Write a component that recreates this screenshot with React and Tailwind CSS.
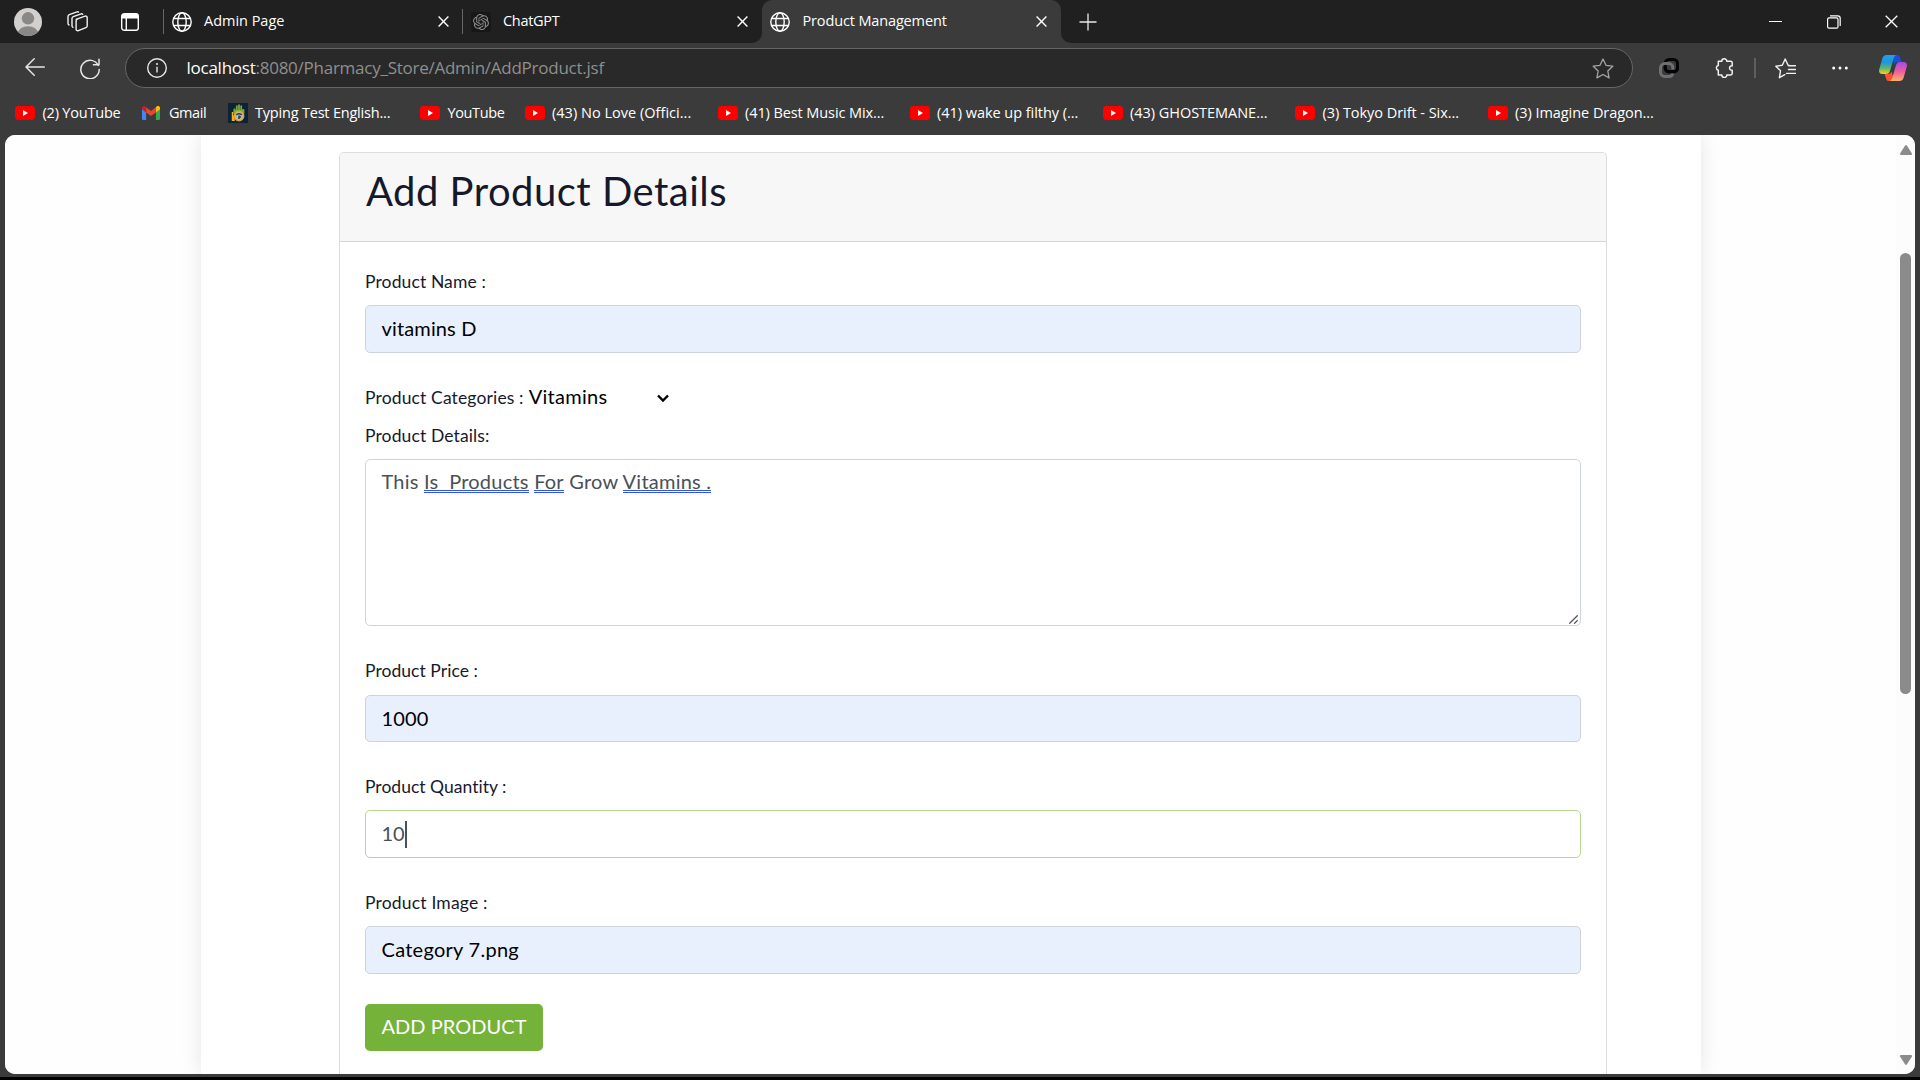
const bookmarks = [
  { label: "(2) YouTube", icon: "youtube", box: "w-[127px]", track: "tracking-[-0.2px]" },
  { label: "Gmail", icon: "gmail", box: "w-[85.5px]", track: "tracking-[-0.45px]" },
  { label: "Typing Test English...", icon: "typing", box: "w-[192.5px]", track: "tracking-[-0.2px]" },
  { label: "YouTube", icon: "youtube", box: "w-[104.5px]", track: "tracking-[-0.38px]" },
  { label: "(43) No Love (Offici...", icon: "youtube", box: "w-[193px]", track: "tracking-[0.02px]" },
  { label: "(41) Best Music Mix...", icon: "youtube", box: "w-[192px]", track: "tracking-[-0.09px]" },
  { label: "(41) wake up filthy (...", icon: "youtube", box: "w-[193px]", track: "tracking-[-0.04px]" },
  { label: "(43) GHOSTEMANE...", icon: "youtube", box: "w-[192.5px]", track: "tracking-[-0.03px]" },
  { label: "(3) Tokyo Drift - Six...", icon: "youtube", box: "w-[192.5px]", track: "tracking-[-0.05px]" },
  { label: "(3) Imagine Dragon...", icon: "youtube", box: "w-[192px]", track: "tracking-[-0.05px]" },
];

function Globe() {
  return (
    <svg className="size-5 shrink-0" viewBox="0 0 20 20" fill="none" stroke="#fff" strokeWidth="1.4">
      <circle cx="10" cy="10" r="9.2" />
      <ellipse cx="10" cy="10" rx="4.2" ry="9.2" />
      <path d="M1.7 6.5h16.6M1.7 13.5h16.6" />
    </svg>
  );
}

function Cross({ size = "size-[11px]", width = 1.4 }) {
  return (
    <svg className={`${size} shrink-0`} viewBox="0 0 11 11" stroke="#fff" strokeWidth={width}>
      <path d="M.6.6l9.8 9.8M10.4.6L.6 10.4" />
    </svg>
  );
}

function ChatGptIcon() {
  return (
    <span className="flex size-5 shrink-0 items-center justify-center rounded-[3px] bg-[#171717]">
      <svg className="size-4" viewBox="0 0 24 24" fill="#8c8c8c">
        <path d="M22.28 9.82a5.98 5.98 0 0 0-.52-4.91 6.05 6.05 0 0 0-6.51-2.9A6.07 6.07 0 0 0 4.98 4.18a5.98 5.98 0 0 0-4 2.9 6.05 6.05 0 0 0 .75 7.1 5.98 5.98 0 0 0 .51 4.9 6.05 6.05 0 0 0 6.52 2.9A5.98 5.98 0 0 0 13.26 24a6.06 6.06 0 0 0 5.77-4.2 5.99 5.99 0 0 0 4-2.9 6.06 6.06 0 0 0-.75-7.08zM13.26 22.43a4.48 4.48 0 0 1-2.88-1.04l.14-.08 4.78-2.76a.8.8 0 0 0 .4-.68v-6.74l2.01 1.17.04.05v5.58a4.5 4.5 0 0 1-4.49 4.5zM3.6 18.3a4.47 4.47 0 0 1-.54-3.01l.15.08 4.78 2.76a.77.77 0 0 0 .78 0l5.84-3.37v2.33l-.03.06-4.84 2.8A4.5 4.5 0 0 1 3.6 18.3zM2.34 7.9a4.49 4.49 0 0 1 2.37-1.98v5.68a.77.77 0 0 0 .39.68l5.81 3.35-2.02 1.17h-.07l-4.83-2.79A4.5 4.5 0 0 1 2.34 7.87zm16.6 3.86l-5.84-3.39L15.12 7.2h.07l4.83 2.79a4.49 4.49 0 0 1-.68 8.1v-5.67a.79.79 0 0 0-.4-.67zm2-3.02l-.14-.09-4.77-2.78a.78.78 0 0 0-.79 0L9.41 9.23V6.9l.03-.06 4.83-2.79a4.5 4.5 0 0 1 6.68 4.66zM8.3 12.86l-2.02-1.16-.04-.06V6.07a4.5 4.5 0 0 1 7.38-3.45l-.14.08L8.7 5.46a.8.8 0 0 0-.4.68zm1.1-2.36l2.6-1.5 2.6 1.5v3l-2.6 1.5-2.6-1.5z" />
      </svg>
    </span>
  );
}

function BookmarkIcon({ kind }) {
  if (kind === "gmail")
    return (
      <svg className="mr-[9px] h-[14px] w-[18px] shrink-0" viewBox="0 0 18 14">
        <path d="M0 2.2V12.8A1.2 1.2 0 0 0 1.2 14H4.1V6z" fill="#4285f4" />
        <path d="M18 2.2V12.8a1.2 1.2 0 0 1-1.2 1.2H13.9V6z" fill="#34a853" />
        <path d="M13.9 1.4V6.4L18 3.3V1.9C18 .2 16-.7 14.8.3z" fill="#fbbc04" />
        <path d="M4.1 6.4V1.2L9 4.9l4.9-3.7v5.2L9 10z" fill="#ea4335" />
        <path d="M0 1.9v1.4l4.1 3.1V1.2L3.2.4C2-.5 0 .2 0 1.9z" fill="#c5221f" />
      </svg>
    );
  if (kind === "typing")
    return (
      <svg className="mr-[7.5px] size-5 shrink-0" viewBox="0 0 20 20">
        <rect width="20" height="20" fill="#0b2239" />
        <path d="M6.5 10V5.500M8.800 9V2.500M11 9V1.500M13.200 9V2.500M15.300 10V6" stroke="#79ab3c" strokeWidth="1.800" />
        <path d="M5.600 7h10.600v4H5.600z" fill="#79ab3c" />
        <path d="M4.500 9v9M6 12.500v5.500" stroke="#f2b51c" strokeWidth="1.500" />
        <circle cx="11" cy="13" r="4.700" fill="#b4bdb9" stroke="#e0a31d" strokeWidth="1.500" />
        <path d="M8.300 11.800q2.700-2 5.400 0M11 12.500v3.500M11 14h2" fill="none" stroke="#2f3b3b" strokeWidth="1.500" />
      </svg>
    );
  return (
    <svg className="mr-[7.5px] h-[14px] w-5 shrink-0" viewBox="0 0 20 14">
      <rect width="20" height="14" rx="3.4" fill="#f00" />
      <path d="M8 4.1v5.8L13 7z" fill="#fff" />
    </svg>
  );
}

function TabStrip() {
  return (
    <div className="flex h-[43px] items-center bg-[#202020] text-[14.5px] leading-5">
      <svg className="ml-[14px] size-7" viewBox="0 0 28 28">
        <defs>
          <clipPath id="avatar">
            <circle cx="14" cy="14" r="14" />
          </clipPath>
        </defs>
        <circle cx="14" cy="14" r="14" fill="#d2d0ce" />
        <circle cx="14" cy="10.3" r="6.2" fill="#8a8886" />
        <ellipse cx="14" cy="25.5" rx="10" ry="7.3" fill="#8a8886" clipPath="url(#avatar)" />
      </svg>
      <svg className="ml-[25px] h-[21px] w-[21px]" viewBox="0 0 21 21" fill="none" stroke="#f2f2f2" strokeWidth="1.4" strokeLinejoin="round" strokeLinecap="round">
        <path d="M9.2 8.3l8.8-3.1a1.6 1.6 0 0 1 2.2 1.5v8.1a2 2 0 0 1-1.3 1.9l-7.6 3a1.6 1.6 0 0 1-2.2-1.5V9.8a2 2 0 0 1 1.3-1.8z" />
        <path d="M6 16.3a1.6 1.6 0 0 1-1-1.5V7.6a2 2 0 0 1 1.3-1.9l7.9-2.8a1.5 1.5 0 0 1 1.5.3" />
        <path d="M2 14a1.6 1.6 0 0 1-1-1.5V5.6a2 2 0 0 1 1.3-1.9L10 .9a1.5 1.5 0 0 1 1.5.2" />
      </svg>
      <svg className="ml-[33px] h-[18px] w-[18px]" viewBox="0 0 18 18" fill="none">
        <rect x=".7" y=".7" width="16.6" height="16.6" rx="2.6" stroke="#fff" strokeWidth="1.4" />
        <path d="M.7 5.4V3A2.3 2.3 0 0 1 3 .7h12A2.3 2.3 0 0 1 17.3 3v2.4z" fill="#fff" />
        <path d="M5.3 5v12" stroke="#fff" strokeWidth="1.4" />
      </svg>
      <div className="ml-6 h-[25px] w-px bg-[#666]" />
      <div className="flex w-[298px] items-center pl-2 text-white">
        <Globe />
        <span className="ml-[12px] flex-1 pb-0.5 tracking-[-0.02px]">Admin Page</span>
        <Cross />
        <span className="w-[13px]" />
      </div>
      <div className="h-[25px] w-px bg-[#666]" />
      <div className="flex w-[299px] items-center pl-2 text-white">
        <ChatGptIcon />
        <span className="ml-[12px] flex-1 pb-0.5 tracking-[-0.3px]">ChatGPT</span>
        <Cross />
        <span className="w-[14px]" />
      </div>
      <div className="relative flex h-[43px] w-[299px] items-center rounded-t-[10px] bg-[#3b3b3b] pl-2 text-white">
        <svg className="absolute -left-[10px] bottom-0 size-[10px]" viewBox="0 0 10 10">
          <path d="M10 0v10H0A10 10 0 0 0 10 0z" fill="#3b3b3b" />
        </svg>
        <svg className="absolute -right-[10px] bottom-0 size-[10px]" viewBox="0 0 10 10">
          <path d="M0 0v10h10A10 10 0 0 1 0 0z" fill="#3b3b3b" />
        </svg>
        <Globe />
        <span className="ml-[12.5px] flex-1 pb-0.5 tracking-[-0.14px]">Product Management</span>
        <Cross />
        <span className="w-[14px]" />
      </div>
      <svg className="ml-[18px] size-[18px]" viewBox="0 0 18 18" stroke="#e8e8e8" strokeWidth="1.3">
        <path d="M9 .5v17M.5 9h17" />
      </svg>
      <div className="ml-auto flex items-center gap-[45px] pr-[22px]">
        <div className="h-px w-[13px] bg-white" />
        <svg className="-mr-[1px] size-[14px]" viewBox="0 0 14 14" fill="none" stroke="#fff" strokeWidth="1.2">
          <rect x=".6" y="2.8" width="10.4" height="10.4" rx="1.5" />
          <path d="M3 .8h7.8a2.4 2.4 0 0 1 2.4 2.4V11" />
        </svg>
        <Cross size="size-[13px]" width={1.1} />
      </div>
    </div>
  );
}

function Copilot() {
  return (
    <svg className="h-[27px] w-7" viewBox="0 0 28 27">
      <defs>
        <linearGradient id="cpA" x1="0" y1="0" x2="0" y2="1">
          <stop offset="0" stopColor="#1fa0f0" />
          <stop offset=".4" stopColor="#2196d8" />
          <stop offset=".7" stopColor="#5fb76a" />
          <stop offset="1" stopColor="#f6d21a" />
        </linearGradient>
        <linearGradient id="cpB" x1="0" y1="0" x2="0" y2="1">
          <stop offset="0" stopColor="#a04be8" />
          <stop offset=".5" stopColor="#ee5f9c" />
          <stop offset="1" stopColor="#fdb06a" />
        </linearGradient>
      </defs>
      <path d="M13 0h5.2c1.6 0 2.3 1 2.8 2.6L22.6 7H19c-2.2 0-3 1.2-3.6 3z" fill="#1a4fd6" />
      <path d="M15 26H10c-1.7 0-2.5-1-3-2.6L5.6 19H9c2.2 0 3-1.2 3.6-3z" fill="#f4552f" />
      <path d="M7.8 0h9.6c-1.7.5-2.3 2-2.9 4l-3.4 11.5C10.4 18 9.3 19 7 19H3.2C.6 19-.4 17 .2 14.5L3.3 3.6C4 1.3 5.4 0 7.8 0z" fill="url(#cpA)" />
      <path d="M20.2 26h-9.6c1.7-.5 2.3-2 2.9-4l3.4-11.5C17.6 8 18.7 7 21 7h3.8c2.6 0 3.6 2 3 4.5l-3.1 10.9c-.7 2.3-2.1 3.6-4.5 3.6z" fill="url(#cpB)" />
    </svg>
  );
}

function Toolbar() {
  return (
    <div className="flex h-[48px] items-center pt-[2px]">
      <svg className="ml-[25px] h-[18px] w-5 -translate-y-px" viewBox="0 0 20 18" fill="none" stroke="#e6e6e6" strokeWidth="1.5" strokeLinecap="round" strokeLinejoin="round">
        <path d="M19.3 9H1M9.2.8L1 9l8.2 8.2" />
      </svg>
      <svg className="ml-[35px] h-[21px] w-5" viewBox="0 0 20 21" fill="none" stroke="#e6e6e6" strokeWidth="1.5" strokeLinecap="round" strokeLinejoin="round">
        <path d="M18.3 7.5A9.2 9.2 0 1 0 19.2 11.5M19 1.2v5.6h-5.6" />
      </svg>
      <div className="ml-[25px] flex h-10 w-[1508px] items-center rounded-full border border-[#666] bg-[#292929] pr-[18px] pl-[21px]">
        <svg className="size-5" viewBox="0 0 20 20" fill="none" stroke="#e6e6e6" strokeWidth="1.4">
          <circle cx="10" cy="10" r="9.3" />
          <path d="M10 8.8v5.7" />
          <circle cx="10" cy="6" r=".4" />
        </svg>
        <div className="ml-[19.5px] flex-1 pb-px text-[17px] leading-6 tracking-[-0.25px] text-[#8f8f8f]">
          <span className="text-white">localhost</span>:8080/Pharmacy_Store/Admin/AddProduct.jsf
        </div>
        <svg className="h-[21px] w-[22px]" viewBox="0 0 22 21" fill="none" stroke="#a3a3a3" strokeWidth="1.3" strokeLinejoin="round">
          <path d="M11 1l3 6.3 6.8.9-5 4.8 1.300 6.900L11 16.500l-6.100 3.400 1.300-6.900-5-4.800L8 7.300z" />
        </svg>
      </div>
      <svg className="ml-[26px] h-5 w-5" viewBox="0 0 20 20" fill="none" strokeWidth="3">
        <rect x="6.200" y="1.500" width="12.300" height="12.300" rx="4" stroke="#050505" />
        <path d="M6.200 5.600a4.400 4.400 0 0 0-4.700 4.400v4.300a4.200 4.200 0 0 0 4.200 4.200h4.200a4.200 4.200 0 0 0 4-3.200M6.200 5.600h3.600a4 4 0 0 1 4 4v1.800" stroke="#6f6f74" />
        <path d="M6.200 8.500v1.300a4 4 0 0 0 4 4h4.300a4 4 0 0 0 4-4" stroke="#050505" />
      </svg>
      <svg className="ml-[36px] h-5 w-[18px]" viewBox="0 0 18 20" fill="none" stroke="#f0f0f0" strokeWidth="1.5" strokeLinejoin="round">
        <path d="M3.300 3.300h3.500a2.500 2.500 0 0 1 5 0h4a1.400 1.400 0 0 1 1.400 1.400v3.200a2.200 2.200 0 1 0 0 4.300v3.400a1.400 1.400 0 0 1-1.400 1.400h-4a2.500 2.500 0 0 1-5 0H3.300v-4.700a2.400 2.400 0 0 1 0-4.700z" />
      </svg>
      <div className="ml-[21px] h-5 w-[2px] bg-[#5e5e5e]" />
      <svg className="ml-[19px] h-[21px] w-[21px]" viewBox="0 0 21 21" fill="none" stroke="#f0f0f0" strokeWidth="1.4" strokeLinejoin="round" strokeLinecap="round">
        <path d="M15 7.600l-1.900-.3L10.200 1 7.300 7.300.8 8.200l4.700 4.600-1.100 6.900 5.400-3M13.500 11.500h7M13.500 7.700h7M11.500 15.400h9" />
      </svg>
      <svg className="ml-[36px] h-1 w-4" viewBox="0 0 16 4" fill="#fff">
        <circle cx="1.700" cy="2" r="1.500" />
        <circle cx="8" cy="2" r="1.500" />
        <circle cx="14.300" cy="2" r="1.500" />
      </svg>
      <div className="ml-[31px]">
        <Copilot />
      </div>
    </div>
  );
}

function Label({ children, track = "tracking-[0.1px]" }) {
  return <div className={`text-[17.5px] leading-[26px] text-[#16192c] ${track}`}>{children}</div>;
}

function Field({ children, className = "" }) {
  return (
    <div className={`flex items-center rounded-[5px] border px-[15.5px] text-[20px] leading-[30px] ${className}`}>
      {children}
    </div>
  );
}

const filled = "border-[#ced4da] bg-[#e8f0fe] text-black";

function Flagged({ children }) {
  return (
    <span className="relative after:absolute after:inset-x-0 after:bottom-0 after:h-[3px] after:border-y after:border-[#3355e8] after:content-['']">
      {children}
    </span>
  );
}

function ProductForm() {
  return (
    <div className="flex h-full flex-col overflow-hidden rounded-t-[5px] border border-b-0 border-[#dcdcdc]">
      <div className="h-[89px] shrink-0 border-b border-[#d4d6d8] bg-[#f7f7f7] px-[26px] pt-[14px]">
        <h1 className="text-[40px] leading-[48px] tracking-[0.48px] text-[#16192c]">Add Product Details</h1>
      </div>
      <div className="flex flex-col px-[25px] pt-[27px]">
        <Label track="tracking-[0.12px]">Product Name :</Label>
        <Field className={`mt-[10px] h-12 pb-[3px] tracking-[0.14px] ${filled}`}>vitamins D</Field>
        <div className="mt-[30px] flex h-[26px] items-baseline">
          <Label track="tracking-[0.14px]">Product Categories :</Label>
          <span className="ml-[5px] text-[20px] leading-[26px] tracking-[0.3px] text-black">Vitamins</span>
          <svg className="ml-[49px] h-[9px] w-3 -translate-y-[1px]" viewBox="0 0 12 9" fill="none" stroke="#000" strokeWidth="2.4">
            <path d="M1 1.500l5 5 5-5" />
          </svg>
        </div>
        <div className="mt-[14px]">
          <Label track="tracking-[0.12px]">Product Details:</Label>
        </div>
        <div className="relative mt-[10px] h-[167px] rounded-[5px] border border-[#ced4da] bg-white px-[15.5px] pt-[6px] text-[20px] leading-[30px] tracking-[0.23px] whitespace-pre text-[#495057]">
          This <Flagged>Is  Products</Flagged> <Flagged>For</Flagged> Grow <Flagged>Vitamins .</Flagged>
          <svg className="absolute right-[2px] bottom-[1px] size-[9px]" viewBox="0 0 9 9" stroke="#555" strokeWidth="1.3">
            <path d="M.3 8.700L8.700.3M5.200 8.700l3.500-3.500" />
          </svg>
        </div>
        <div className="mt-[32px]">
          <Label track="tracking-[0.05px]">Product Price :</Label>
        </div>
        <Field className={`mt-[11px] h-[47px] pb-[2px] tracking-[0.15px] ${filled}`}>1000</Field>
        <div className="mt-[32px]">
          <Label track="tracking-[0.02px]">Product Quantity :</Label>
        </div>
        <Field className="mt-[10px] h-12 border-[#b3d98d] bg-white text-[#495057]">
          <span className="pb-[2px]">10</span>
          <span className="h-[27px] w-[2px] bg-[#495057]" />
        </Field>
        <div className="mt-[32px]">
          <Label track="tracking-[0.18px]">Product Image :</Label>
        </div>
        <Field className={`mt-[10px] h-12 pb-[3px] tracking-[0.27px] ${filled}`}>Category 7.png</Field>
        <button className="mt-[30px] h-[47px] w-[178px] rounded-[5px] bg-[#75b239] pb-[4px] text-[20px] leading-[30px] tracking-[0.04px] text-white">
          ADD PRODUCT
        </button>
      </div>
    </div>
  );
}

export default function App() {
  return (
    <div className="flex h-[1080px] w-[1920px] flex-col overflow-hidden border-b-[3px] border-black bg-[#3b3b3b] font-['Open_Sans',sans-serif]">
      <TabStrip />
      <Toolbar />
      <div className="flex h-11 items-center pl-[15px] text-[14.5px] leading-5 text-white">
        {bookmarks.map((b) => (
          <div key={b.label} className={`flex shrink-0 items-center whitespace-nowrap ${b.box} ${b.track}`}>
            <BookmarkIcon kind={b.icon} />
            <span className="pb-px">{b.label}</span>
          </div>
        ))}
      </div>
      <div className="mx-[5px] flex h-[939px] overflow-hidden rounded-[10px] bg-white font-['Lato',sans-serif]">
        <div className="flex-1 overflow-hidden bg-[#fefefe]">
          <div className="mr-[195px] ml-[196px] h-full bg-white pt-[17px] pr-[94px] pl-[138px] shadow-[0_0_20px_rgba(0,0,0,0.1)]">
            <ProductForm />
          </div>
        </div>
        <div className="flex w-[19px] flex-col items-center bg-[#fcfcfc]">
          <svg className="mt-[10px] h-[10px] w-3 shrink-0" viewBox="0 0 12 10" fill="#8b8b8b">
            <path d="M5 .8a1.200 1.200 0 0 1 2 0l4.800 7.400A1.200 1.200 0 0 1 10.900 10H1.100A1.200 1.200 0 0 1 .2 8.200z" />
          </svg>
          <div className="mt-[98px] h-[441px] w-[11px] rounded-full bg-[#8b8b8b]" />
          <svg className="mt-auto mb-[9px] h-[10px] w-3 shrink-0" viewBox="0 0 12 10" fill="#8b8b8b">
            <path d="M5 9.200a1.200 1.200 0 0 0 2 0l4.800-7.400A1.200 1.200 0 0 0 10.900 0H1.100A1.200 1.200 0 0 0 .2 1.800z" />
          </svg>
        </div>
      </div>
    </div>
  );
}
